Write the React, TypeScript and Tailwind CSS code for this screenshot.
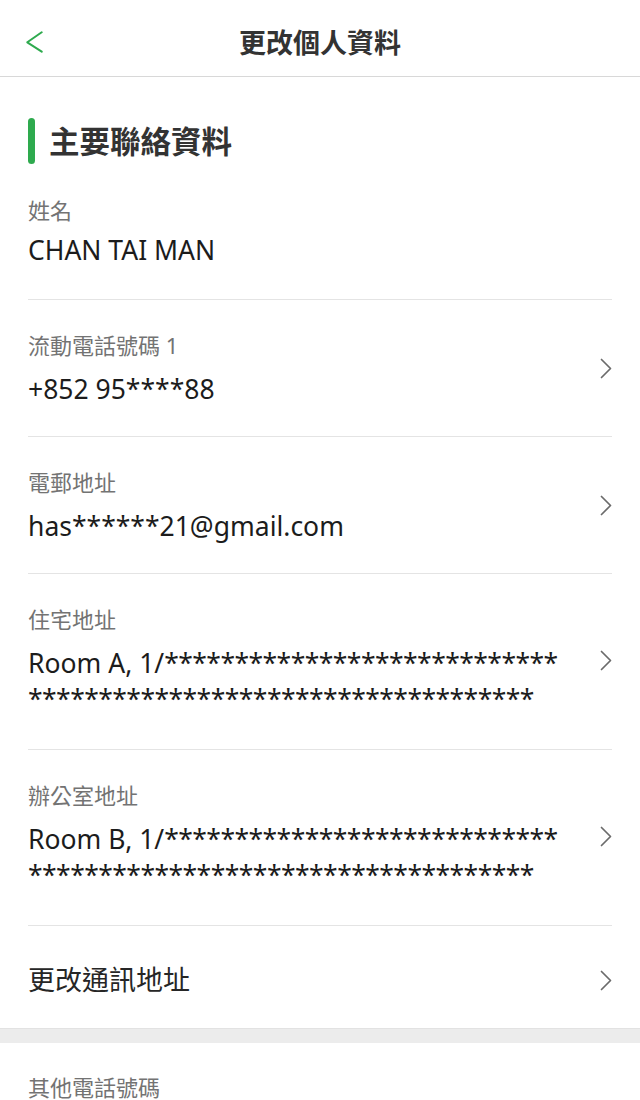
import React from "react";

const FONT = { fontFamily: '"Noto Sans", "Noto Sans CJK TC", sans-serif' };

function Chevron() {
  return (
    <svg width="12" height="21" viewBox="0 0 12 21" fill="none" className="shrink-0">
      <polyline points="1.5,1.5 10.5,10.5 1.5,19.5" stroke="#6b6b6b" strokeWidth="1.7" strokeLinecap="round" strokeLinejoin="round" />
    </svg>
  );
}

function Row({
  label,
  lines,
  multi,
}: {
  label: string;
  lines: React.ReactNode[];
  multi?: boolean;
}) {
  return (
    <div className={`flex items-center border-b border-[#e4e4e4] pt-[30px] ${multi ? "pb-[32px]" : "pb-[29px]"}`}>
      <div className="flex-1 min-w-0">
        <div className="text-[22px] leading-[30px] text-[#737373]">{label}</div>
        <div className="mt-[11px] text-[26.5px] leading-[36px] text-[#1c1c1c] whitespace-nowrap">
          {lines.map((l, i) => (
            <div key={i}>{l}</div>
          ))}
        </div>
      </div>
      <div className="pl-3">
        <Chevron />
      </div>
    </div>
  );
}

function Stars({ n }: { n: number }) {
  return <span className="tracking-[-0.55px]">{"*".repeat(n)}</span>;
}

export default function App() {
  return (
    <div className="w-[640px] h-[1100px] overflow-hidden bg-white" style={FONT}>
      {/* Header */}
      <div className="h-[77px] pt-[8px] border-b border-[#d8d8d8] grid grid-cols-[1fr_auto_1fr] items-center">
        <div className="pl-[26px] flex items-center">
          <svg width="18" height="22" viewBox="0 0 18 22" fill="none">
            <polyline points="15.7,1.3 1.3,11.3 15.7,20.7" stroke="#2eaa4e" strokeWidth="2" strokeLinecap="round" strokeLinejoin="round" />
          </svg>
        </div>
        <div className="text-[27px] font-bold text-[#333333] leading-none">更改個人資料</div>
        <div />
      </div>

      {/* Section heading */}
      <div className="px-[28px]">
        <div className="mt-[41px] flex items-center h-[46px]">
          <div className="w-[7px] h-[46px] rounded-full bg-[#2eaa4e]" />
          <div className="ml-[14px] text-[30.5px] font-bold text-[#333333] leading-none">主要聯絡資料</div>
        </div>

        {/* Name */}
        <div className="border-b border-[#e4e4e4] pt-[31px] pb-[31px]">
          <div className="text-[22px] leading-[30px] text-[#737373]">姓名</div>
          <div className="mt-[7px] text-[26.5px] leading-[36px] text-[#1c1c1c]">CHAN TAI MAN</div>
        </div>

        <Row label="流動電話號碼 1" lines={["+852 95****88"]} />
        <Row label="電郵地址" lines={["has******21@gmail.com"]} />
        <Row
          label="住宅地址"
          lines={[
            <>
              Room A, 1/<Stars n={28} />
            </>,
            <Stars n={36} />,
          ]}
          multi
        />
        <Row
          label="辦公室地址"
          lines={[
            <>
              Room B, 1/<Stars n={28} />
            </>,
            <Stars n={36} />,
          ]}
          multi
        />

        <div className="flex items-center pt-[36px] pb-[30px]">
          <div className="flex-1 text-[27px] leading-[36px] text-[#262626]">更改通訊地址</div>
          <div className="pl-3">
            <Chevron />
          </div>
        </div>
      </div>

      <div className="h-[15px] bg-[#ececec] border-t border-[#e2e2e2]" />

      <div className="px-[28px] pt-[29px]">
        <div className="text-[22px] leading-[30px] text-[#737373]">其他電話號碼</div>
      </div>
    </div>
  );
}
